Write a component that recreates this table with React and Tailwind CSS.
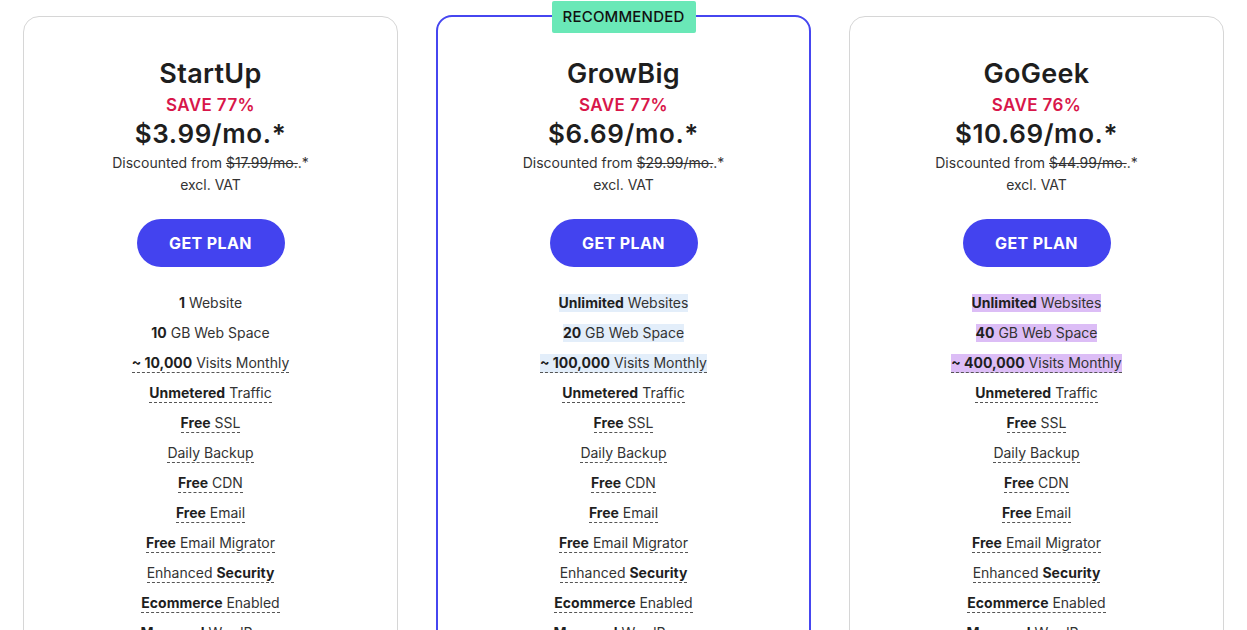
import React from "react";

const plans = [
  {
    name: "StartUp",
    save: "SAVE 77%",
    price: "$3.99/mo.*",
    from: "$17.99/mo.",
    hl: null,
    top: [
      [["1", true], [" Website", false]],
      [["10", true], [" GB Web Space", false]],
      [["~ 10,000", true], [" Visits Monthly", false]],
    ],
  },
  {
    name: "GrowBig",
    save: "SAVE 77%",
    price: "$6.69/mo.*",
    from: "$29.99/mo.",
    hl: "bg-[#e3eefa]",
    rec: true,
    top: [
      [["Unlimited", true], [" Websites", false]],
      [["20", true], [" GB Web Space", false]],
      [["~ 100,000", true], [" Visits Monthly", false]],
    ],
  },
  {
    name: "GoGeek",
    save: "SAVE 76%",
    price: "$10.69/mo.*",
    from: "$44.99/mo.",
    hl: "bg-[#dcbdf6]",
    top: [
      [["Unlimited", true], [" Websites", false]],
      [["40", true], [" GB Web Space", false]],
      [["~ 400,000", true], [" Visits Monthly", false]],
    ],
  },
];

const common = [
  [["Unmetered", true], [" Traffic", false]],
  [["Free", true], [" SSL", false]],
  [["Daily Backup", false]],
  [["Free", true], [" CDN", false]],
  [["Free", true], [" Email", false]],
  [["Free", true], [" Email Migrator", false]],
  [["Enhanced ", false], ["Security", true]],
  [["Ecommerce", true], [" Enabled", false]],
  [["Managed", true], [" WordPress", false]],
];

function Feature({ parts, dashed, hl }) {
  return (
    <div className="h-[30px] flex items-center justify-center">
      <span
        className={
          "inline-block leading-[18px] whitespace-pre " +
          (dashed ? "border-b border-dashed border-[#555] " : "") +
          (hl || "")
        }
      >
        {parts.map(([t, b], i) => (
          <span key={i} className={b ? "font-bold text-[#1f1f1f]" : ""}>
            {t}
          </span>
        ))}
      </span>
    </div>
  );
}

function Card({ p }) {
  return (
    <div
      className={
        "relative bg-white rounded-[16px] pt-[40px] h-[700px] flex flex-col items-center " +
        (p.rec ? "border-2 border-[#4646f0] -mt-px" : "border border-[#d6d6d6]")
      }
    >
      {p.rec && (
        <div className="absolute -top-[16px] left-1/2 -translate-x-1/2 bg-[#6ae8b7] rounded-[2px] h-[32px] w-[144px] flex items-center justify-center text-[15px] font-medium text-[#111] tracking-[0.2px]">
          RECOMMENDED
        </div>
      )}
      <div className="text-[27px] leading-[34px] font-semibold text-[#1e1e1e] tracking-[0.3px]">
        {p.name}
      </div>
      <div className="text-[17px] leading-[28px] font-semibold text-[#d8164a] tracking-[0.4px]">
        {p.save}
      </div>
      <div className="text-[26px] leading-[30px] font-semibold text-[#1e1e1e] tracking-[0.6px]">
        {p.price}
      </div>
      <div className="mt-[3px] text-[14px] leading-[22px] text-[#333]">
        Discounted from <span className="line-through">{p.from}</span>.*
      </div>
      <div className="text-[14px] leading-[22px] text-[#333]">excl. VAT</div>
      <button className="mt-[23px] w-[148px] h-[48px] rounded-full bg-[#4343ef] text-white text-[16px] font-bold tracking-[0.4px]">
        GET PLAN
      </button>
      <div className="mt-[21px] w-full text-[14px] text-[#333]">
        {p.top.map((parts, i) => (
          <Feature key={i} parts={parts} dashed={i === 2} hl={p.hl} />
        ))}
        {common.map((parts, i) => (
          <Feature key={"c" + i} parts={parts} dashed />
        ))}
      </div>
    </div>
  );
}

export default function App() {
  return (
    <div
      className="w-[1247px] h-[630px] overflow-hidden bg-white"
      style={{ fontFamily: "Inter, 'Noto Sans', sans-serif" }}
    >
      <div className="grid grid-cols-3 gap-[38px] px-[23px] pt-[16px]">
        {plans.map((p) => (
          <Card key={p.name} p={p} />
        ))}
      </div>
    </div>
  );
}
